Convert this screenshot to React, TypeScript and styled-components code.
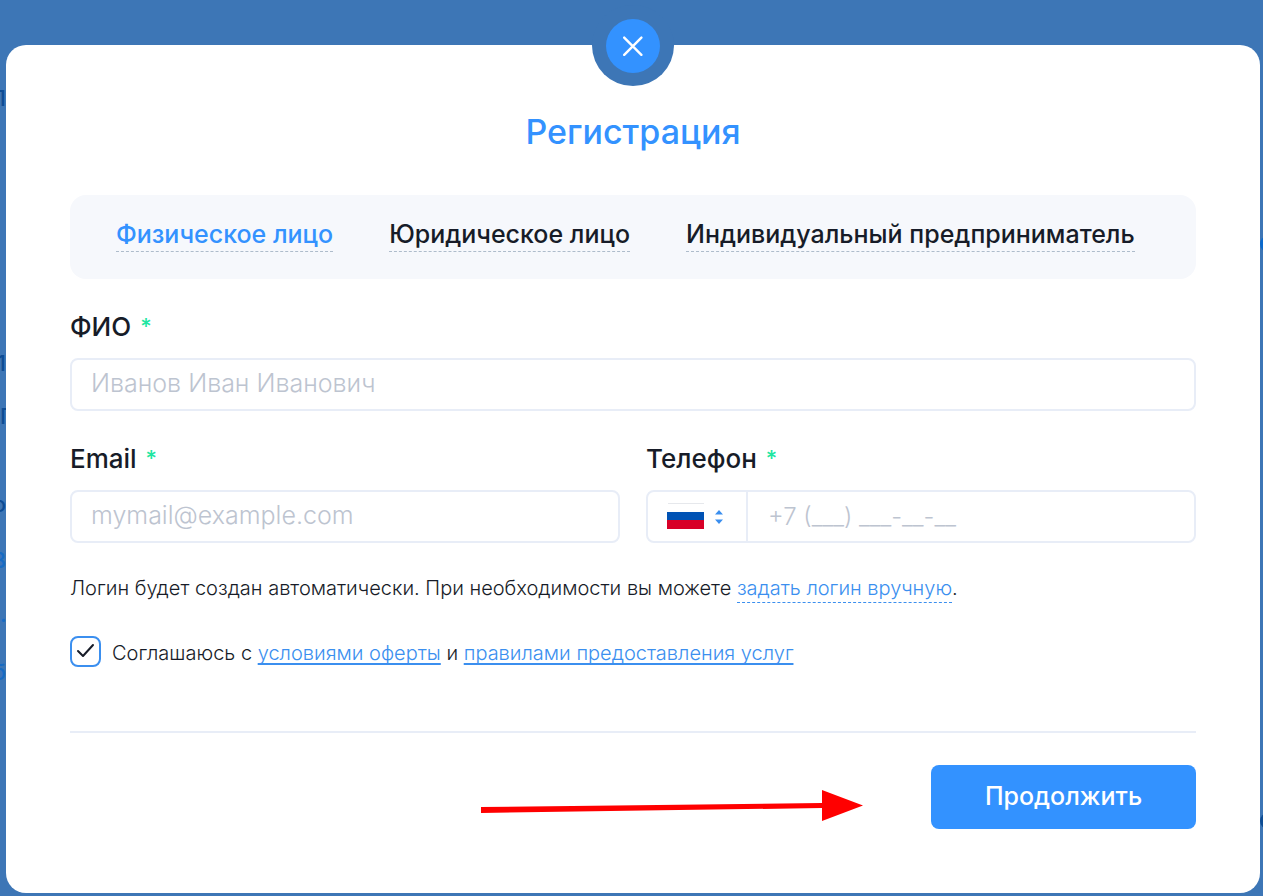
import React, { useState } from "react";
import styled, { createGlobalStyle } from "styled-components";

const color = {
  veil: "#3d76b6",
  accent: "#3392ff",
  link: "#3b8fef",
  ink: "#171c28",
  line: "#e8edf7",
  panel: "#f6f8fc",
  hint: "#bdc4d0",
  required: "#21e6a1",
};

const GlobalStyle = createGlobalStyle`
  *, *::before, *::after { box-sizing: border-box; }
  body {
    margin: 0;
    background: ${color.veil};
    color: ${color.ink};
    font-family: Inter, "Liberation Sans", sans-serif;
  }
  button, input, select { font: inherit; color: inherit; }
`;

const Screen = styled.div`
  position: relative;
  min-height: 100vh;
  padding: 45px 3px 3px 6px;
  overflow: hidden;
`;

const Behind = styled.div<{ $side: "left" | "right" }>`
  position: absolute;
  top: 0;
  ${(p) => p.$side}: 0;
  width: ${(p) => (p.$side === "left" ? 6 : 3)}px;
  overflow: hidden;
  display: flex;
  flex-direction: column;
  font-size: 22px;
  font-weight: 500;
  line-height: 20px;
`;

const Scrap = styled.span<{ $gap: number; $tone: string; $end?: boolean }>`
  display: flex;
  justify-content: ${(p) => (p.$end ? "flex-end" : "flex-start")};
  height: 20px;
  margin-top: ${(p) => p.$gap}px;
  color: ${(p) => p.$tone};
`;

const Knob = styled.i<{ $gap: number; $tone: string }>`
  width: 16px;
  height: 16px;
  margin-top: ${(p) => p.$gap}px;
  border-radius: 50%;
  background: ${(p) => p.$tone};
`;

const Dialog = styled.main`
  position: relative;
  padding: 64px;
  border-radius: 20px;
  background: #fff;
`;

const CloseNotch = styled.div`
  position: absolute;
  top: -40px;
  left: 50%;
  margin-left: -41px;
  width: 82px;
  height: 81px;
  display: grid;
  place-items: center;
  border-radius: 50%;
  background: ${color.veil};
`;

const CloseButton = styled.button`
  width: 54px;
  height: 54px;
  padding: 0;
  display: grid;
  place-items: center;
  border: 0;
  border-radius: 50%;
  background: ${color.accent};
  cursor: pointer;
`;

const Title = styled.h1`
  margin: 0 0 40px;
  color: ${color.accent};
  font-size: 34px;
  font-weight: 500;
  line-height: 46px;
  text-align: center;
`;

const Tabs = styled.nav`
  display: flex;
  align-items: flex-start;
  gap: 56px;
  height: 84px;
  margin-bottom: 32px;
  padding: 22px 46px;
  border-radius: 16px;
  background: ${color.panel};
`;

const Tab = styled.button<{ $active: boolean }>`
  padding: 0;
  border: 0;
  border-bottom: 1px dashed #aebccb;
  background: none;
  color: ${(p) => (p.$active ? color.accent : color.ink)};
  font-size: 25px;
  font-weight: 500;
  line-height: 34px;
  white-space: nowrap;
  cursor: pointer;
`;

const Field = styled.div`
  display: flex;
  flex-direction: column;
  gap: 15px;
  min-width: 0;
  margin-bottom: 32px;
`;

const Label = styled.label`
  font-size: 26px;
  font-weight: 500;
  line-height: 32px;
`;

const Required = styled.span`
  margin-left: 2px;
  color: ${color.required};
  font-size: 22px;
  line-height: 24px;
  vertical-align: 2px;
`;

const FieldRow = styled.div`
  display: grid;
  grid-template-columns: 1fr 1fr;
  gap: 26px;
`;

const TextInput = styled.input`
  width: 100%;
  height: 53px;
  padding: 0 19px 4px;
  border: 2px solid ${color.line};
  border-radius: 8px;
  background: #fff;
  font-size: 25px;
  font-weight: 300;
  outline: none;
  &::placeholder { color: ${color.hint}; opacity: 1; }
`;

const PhoneBox = styled.div`
  display: flex;
  height: 53px;
  border: 2px solid ${color.line};
  border-radius: 8px;
`;

const PhoneInput = styled(TextInput)`
  flex: 1;
  min-width: 0;
  height: 49px;
  padding: 0 20px;
  border: 0;
  font-size: 24px;
`;

const Country = styled.div`
  position: relative;
  flex: none;
  width: 100px;
  display: flex;
  align-items: center;
  gap: 11px;
  padding-left: 19px;
  border-right: 2px solid ${color.line};
`;

const CountrySelect = styled.select`
  position: absolute;
  inset: 0;
  width: 100%;
  opacity: 0;
  cursor: pointer;
`;

const Note = styled.p`
  margin: 0 0 35px;
  font-size: 20px;
  font-weight: 350;
  line-height: 26px;
`;

const Link = styled.a`
  color: ${color.link};
  text-decoration: underline 2px;
  text-underline-offset: 3px;
  text-decoration-skip-ink: none;
`;

const DashedLink = styled(Link)`
  padding-bottom: 2px;
  border-bottom: 1px dashed ${color.link};
  text-decoration: none;
`;

const Agreement = styled.div`
  display: flex;
  align-items: center;
  gap: 11px;
  padding-bottom: 64px;
  border-bottom: 2px solid ${color.line};
  font-size: 20px;
  font-weight: 350;
  line-height: 24px;
`;

const AgreementLabel = styled.label`
  padding-top: 2px;
`;

const TickBox = styled.span`
  position: relative;
  flex: none;
  width: 31px;
  height: 31px;
  svg { position: absolute; inset: 0; pointer-events: none; }
`;

const Tick = styled.input`
  appearance: none;
  display: block;
  width: 31px;
  height: 31px;
  margin: 0;
  border: 2px solid ${color.link};
  border-radius: 8px;
  background: #fff;
  &:not(:checked) + svg { display: none; }
`;

const Actions = styled.footer`
  display: flex;
  justify-content: flex-end;
  align-items: center;
  gap: 68px;
  padding-top: 32px;
`;

const Pointer = styled.svg`
  flex: none;
  margin-top: 18px;
`;

const Submit = styled.button`
  width: 265px;
  height: 64px;
  padding: 0 0 2px;
  border: 0;
  border-radius: 8px;
  background: ${color.accent};
  color: #fff;
  font-size: 25px;
  font-weight: 500;
  cursor: pointer;
`;

const kinds = ["Физическое лицо", "Юридическое лицо", "Индивидуальный предприниматель"];

export default function App() {
  const [kind, setKind] = useState(0);
  return (
    <>
      <GlobalStyle />
      <Screen>
        <Behind $side="left" aria-hidden="true">
          <Scrap $gap={88} $tone="#0d4c94" $end>П</Scrap>
          <Scrap $gap={245} $tone="#0d4c94" $end>1</Scrap>
          <Scrap $gap={33} $tone="#0d4c94">Г</Scrap>
          <Scrap $gap={68} $tone="#0d4c94" $end>о</Scrap>
          <Scrap $gap={36} $tone="#176bc4" $end>В</Scrap>
          <Scrap $gap={34} $tone="#176bc4">.</Scrap>
          <Scrap $gap={38} $tone="#176bc4" $end>б</Scrap>
        </Behind>
        <Behind $side="right" aria-hidden="true">
          <Knob $gap={236} $tone="#0b69cc" />
          <Knob $gap={561} $tone="#0d4c94" />
        </Behind>
        <Dialog>
          <CloseNotch>
            <CloseButton type="button" aria-label="Закрыть">
              <svg width="20" height="20" viewBox="0 0 20 20" fill="none" stroke="#fff" strokeWidth="2.4" strokeLinecap="round">
                <path d="M1.2 1.6 18.4 18.8M18.4 1.6 1.2 18.8" />
              </svg>
            </CloseButton>
          </CloseNotch>
          <Title>Регистрация</Title>
          <Tabs>
            {kinds.map((name, i) => (
              <Tab key={name} type="button" $active={i === kind} onClick={() => setKind(i)}>
                {name}
              </Tab>
            ))}
          </Tabs>
          <form onSubmit={(e) => e.preventDefault()}>
            <Field>
              <Label htmlFor="name">ФИО <Required>*</Required></Label>
              <TextInput id="name" placeholder="Иванов Иван Иванович" />
            </Field>
            <FieldRow>
              <Field>
                <Label htmlFor="email">Email <Required>*</Required></Label>
                <TextInput id="email" type="email" placeholder="mymail@example.com" />
              </Field>
              <Field>
                <Label htmlFor="phone">Телефон <Required>*</Required></Label>
                <PhoneBox>
                  <Country>
                    <svg width="37" height="27" viewBox="0 0 37 27">
                      <path d="M1 .5h36" stroke="#e6e8ec" />
                      <path fill="#0052b4" d="M0 9h37v9H0z" />
                      <path fill="#d80027" d="M0 17h37v9H0z" />
                    </svg>
                    <svg width="8" height="14" viewBox="0 0 8 14" fill={color.link}>
                      <path d="M4 0 8 4.500H0zM4 14 8 9.500H0z" />
                    </svg>
                    <CountrySelect aria-label="Страна" defaultValue="ru">
                      <option value="ru">+7</option>
                    </CountrySelect>
                  </Country>
                  <PhoneInput id="phone" type="tel" placeholder="+7 (___) ___-__-__" />
                </PhoneBox>
              </Field>
            </FieldRow>
            <Note>
              Логин будет создан автоматически. При необходимости вы можете{" "}
              <DashedLink href="#login">задать логин вручную</DashedLink>.
            </Note>
            <Agreement>
              <TickBox>
                <Tick id="agree" type="checkbox" defaultChecked />
                <svg width="31" height="31" viewBox="0 0 31 31" fill="none" stroke={color.ink} strokeWidth="2" strokeLinecap="round" strokeLinejoin="round">
                  <path d="m8 15 5 5L23 9" />
                </svg>
              </TickBox>
              <AgreementLabel htmlFor="agree">
                Соглашаюсь с <Link href="#offer">условиями оферты</Link> и{" "}
                <Link href="#rules">правилами предоставления услуг</Link>
              </AgreementLabel>
            </Agreement>
            <Actions>
              <Pointer width="382" height="32" viewBox="0 0 382 32" fill="red" aria-hidden="true">
                <path d="M0 17 341 13V0L382 15.500 341 31V18L0 23z" />
              </Pointer>
              <Submit type="submit">Продолжить</Submit>
            </Actions>
          </form>
        </Dialog>
      </Screen>
    </>
  );
}
